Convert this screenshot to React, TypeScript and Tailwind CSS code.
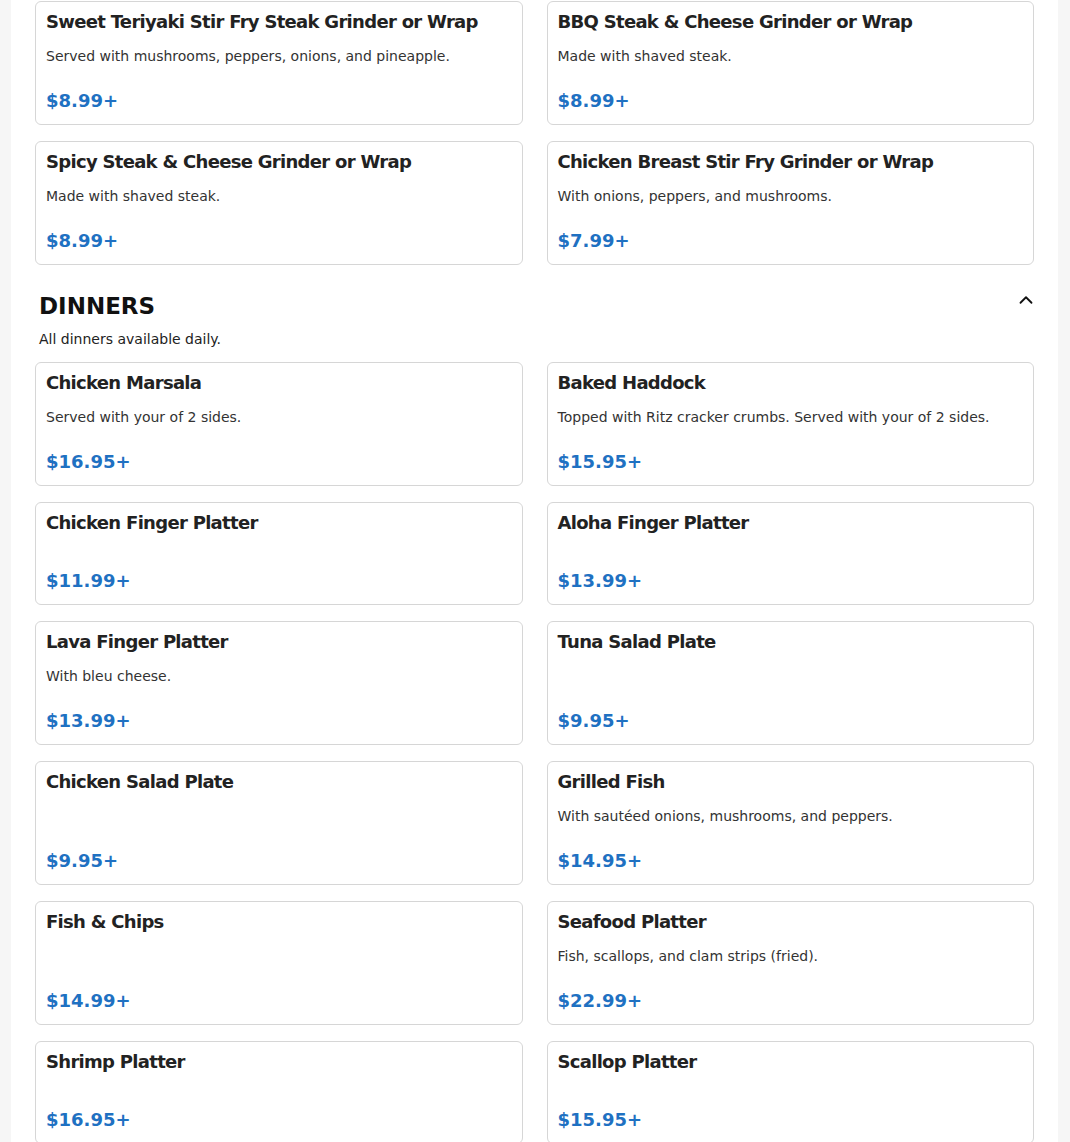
import { ChevronUp } from "lucide-react";

type Item = { name: string; desc?: string; price: string };

const grinders: Item[] = [
    { name: "Sweet Teriyaki Stir Fry Steak Grinder or Wrap", desc: "Served with mushrooms, peppers, onions, and pineapple.", price: "$8.99+" },
    { name: "BBQ Steak & Cheese Grinder or Wrap", desc: "Made with shaved steak.", price: "$8.99+" },
    { name: "Spicy Steak & Cheese Grinder or Wrap", desc: "Made with shaved steak.", price: "$8.99+" },
    { name: "Chicken Breast Stir Fry Grinder or Wrap", desc: "With onions, peppers, and mushrooms.", price: "$7.99+" },
];

const dinners: Item[] = [
    { name: "Chicken Marsala", desc: "Served with your of 2 sides.", price: "$16.95+" },
    { name: "Baked Haddock", desc: "Topped with Ritz cracker crumbs. Served with your of 2 sides.", price: "$15.95+" },
    { name: "Chicken Finger Platter", price: "$11.99+" },
    { name: "Aloha Finger Platter", price: "$13.99+" },
    { name: "Lava Finger Platter", desc: "With bleu cheese.", price: "$13.99+" },
    { name: "Tuna Salad Plate", price: "$9.95+" },
    { name: "Chicken Salad Plate", price: "$9.95+" },
    { name: "Grilled Fish", desc: "With sautéed onions, mushrooms, and peppers.", price: "$14.95+" },
    { name: "Fish & Chips", price: "$14.99+" },
    { name: "Seafood Platter", desc: "Fish, scallops, and clam strips (fried).", price: "$22.99+" },
    { name: "Shrimp Platter", price: "$16.95+" },
    { name: "Scallop Platter", price: "$15.95+" },
];

const MenuCard = ({ item }: { item: Item }) => {
    return (
        <div className="flex flex-col rounded-md border border-[#d6d6d6] bg-white px-2.5 py-2.5">
            <div className="mb-[15px] text-lg font-bold leading-[19px] tracking-[-0.7px] text-[#222]">{item.name}</div>
            {item.desc && (
                <p className="text-sm leading-[21px] text-[#333]">{item.desc}</p>
            )}
            <div className="mt-auto pt-5 text-lg font-bold leading-[27px] text-[#1f71c2]">
                {item.price}
            </div>
        </div>
    )
}

const MenuGrid = ({ items }: { items: Item[] }) => {
    return (
        <div className="grid grid-cols-2 gap-x-6 gap-y-4">
            {items.map((item) => (
                <MenuCard key={item.name} item={item} />
            ))}
        </div>
    )
}

export default function App() {
    return (
        <div className="min-h-screen bg-[#f6f6f6] pl-[11px] pr-[12px] font-['DejaVu_Sans',sans-serif]">
            <div className="bg-white px-6 pt-px pb-10">
                <MenuGrid items={grinders} />

                <div className="mt-[27px]">
                    <div className="flex items-start justify-between">
                        <h2 className="pl-1 text-[23px] font-bold leading-7 text-[#111]">DINNERS</h2>
                        <ChevronUp size={22} strokeWidth={2} className="-mt-[3px] -mr-[2.5px] text-[#111]" />
                    </div>
                    <p className="mt-[9px] pl-1 text-sm leading-5 text-[#222]">All dinners available daily.</p>
                    <div className="mt-[13px]">
                        <MenuGrid items={dinners} />
                    </div>
                </div>
            </div>
        </div>
    )
}
